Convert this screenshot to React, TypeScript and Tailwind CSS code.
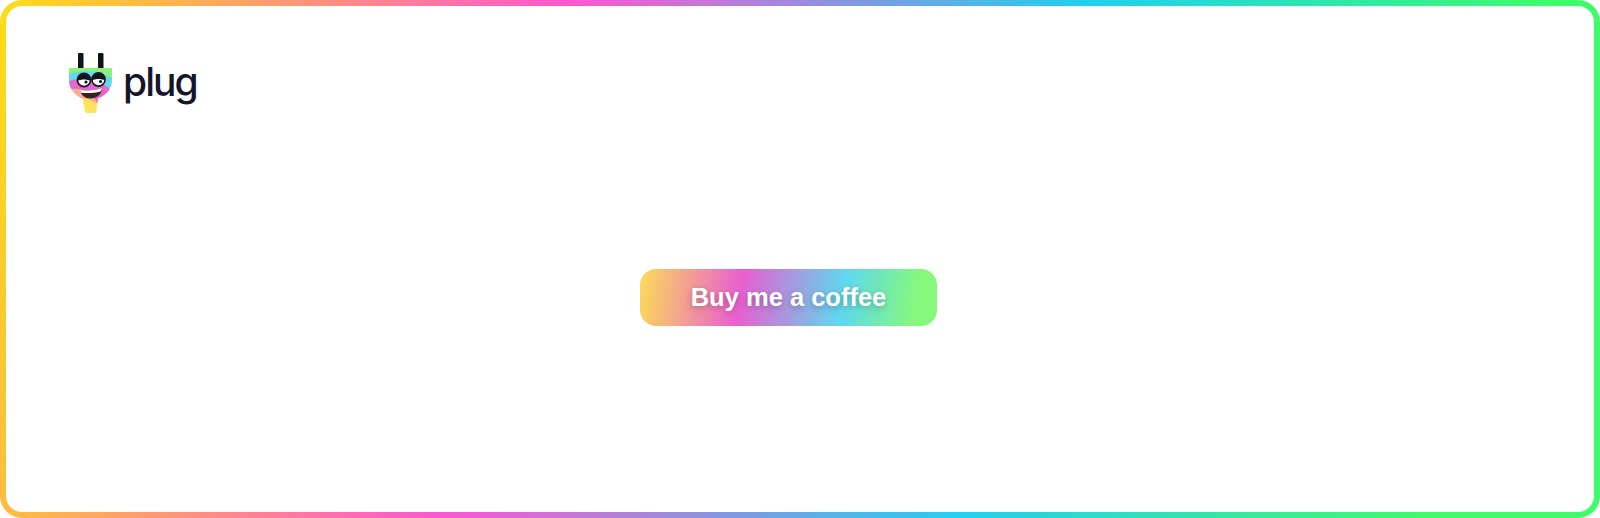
import React from "react";

function PlugIcon() {
  return (
    <svg width="44" height="60" viewBox="0 0 44 60" className="shrink-0">
      <defs>
        <clipPath id="plugBody">
          <path d="M1.5 15 H41.5 C42.5 15 43 15.5 43 16.5 V27 C43 36 37 42.5 29 45.5 L27.5 57.5 C27.3 59 26.5 60 25 60 H18.5 C17 60 16.2 59 16 57.5 L13.5 45.5 C6 42.5 0 36 0 27 V16.5 C0 15.5 .5 15 1.5 15 Z" />
        </clipPath>
        <filter id="soft">
          <feGaussianBlur stdDeviation="0.7" />
        </filter>
      </defs>
      <rect x="9" y="0" width="5.5" height="17" rx="1" fill="#0c1618" />
      <rect x="29" y="0" width="5.5" height="17" rx="1" fill="#0c1618" />
      <g clipPath="url(#plugBody)">
        <g filter="url(#soft)">
          <rect x="-2" y="13" width="48" height="49" fill="#8af27c" />
          <path d="M-2 22 C12 15 34 18 46 27 V62 H-2 Z" fill="#62d8ea" />
          <path d="M-2 29 C12 23 32 26 45 40 L30 62 H-2 Z" fill="#e765cf" />
          <path d="M-2 37 C10 33 23 38 28 50 L28 62 H-2 Z" fill="#f9ae8f" />
          <path d="M-2 46 C8 43 20 46 30 51 V62 H-2 Z" fill="#fde25a" />
        </g>
      </g>
      <circle cx="15" cy="27" r="6.6" fill="#fff" stroke="#14161f" strokeWidth="1.6" />
      <circle cx="29.5" cy="26.5" r="6.6" fill="#fff" stroke="#14161f" strokeWidth="1.6" />
      <path d="M8.4 28 C8.4 18.5 21.6 18.5 21.6 28 C18 26 12 26 8.4 28 Z" fill="#14161f" />
      <path d="M22.9 27.5 C22.9 18 36.1 18 36.1 27.5 C32.5 25.5 26.5 25.5 22.9 27.5 Z" fill="#14161f" />
      <circle cx="17" cy="29" r="1.6" fill="#14161f" />
      <circle cx="31.5" cy="28.5" r="1.6" fill="#14161f" />
      <path d="M11 37 C17 38 27 37.5 33 35 C33 41 28 45.5 21.5 45.5 C16 45.5 12 42 11 37 Z" fill="#33241f" />
      <path d="M11 37 C17 38 27 37.5 33 35 C32.6 37 32 38 31.5 38.5 C26 40 18 40.5 12.2 39.8 C11.6 39 11.2 38 11 37 Z" fill="#fff" />
    </svg>
  );
}

export default function App() {
  return (
    <div className="h-[518px] w-full bg-white">
      <div className="h-full rounded-[22px] bg-[linear-gradient(104deg,#ffdc14_0%,#ff55d0_33%,#1fd0f0_63%,#3dfc6a_90%)] p-[6px]">
        <div className="flex h-full flex-col rounded-[16px] bg-white px-[63px] pt-[47px]">
          <div className="flex items-start gap-[10px]">
            <PlugIcon />
            <span className="mt-[3px] font-['Inter',sans-serif] text-[39px] leading-[52px] font-medium tracking-[-0.05em] text-[#14172b]">
              plug
            </span>
          </div>
          <div className="flex justify-center pt-[156px] pr-[23px]">
            <button className="flex h-[57px] w-[297px] items-center justify-center rounded-[16px] bg-[linear-gradient(98deg,#fcdc58_0%,#e85fd0_34%,#5fd8ee_68%,#85f87c_92%)] font-['Liberation_Sans',Arial,sans-serif] text-[25.5px] font-bold text-white [text-shadow:0_2px_6px_rgba(0,0,0,0.25)]">
              Buy me a coffee
            </button>
          </div>
        </div>
      </div>
    </div>
  );
}
